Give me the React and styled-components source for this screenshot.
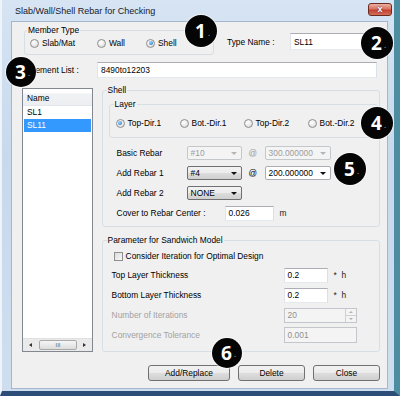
import React from 'react';
import styled, { createGlobalStyle, css } from 'styled-components';

const GlobalStyle = createGlobalStyle`
  html, body { margin: 0; padding: 0; background: #ffffff; }
  body {
    font-family: "Liberation Sans", Arial, sans-serif;
    font-size: 8.4px;
    color: #000;
  }
  * { box-sizing: border-box; }
`;

const Window = styled.div`
  position: relative;
  width: 400px;
  height: 396px;
  display: flex;
  flex-direction: column;
  padding: 0 6px 2px 9px;
  background: linear-gradient(#d6e4f3, #c8d9ec 40%, #cfdeef);
  border-left: 2px solid #eef4fa;
  border-right: 6px solid #4d8da2;
  border-bottom: 5px solid #2b4d77;
`;

const TitleBar = styled.div`
  height: 21px;
  display: flex;
  align-items: flex-start;
  margin-left: -7px;
  margin-right: -4px;
  padding-left: 11px;
`;

const Title = styled.span`
  font-size: 9px;
  line-height: 10px;
  padding-top: 6px;
  color: #15202c;
`;

const CloseButton = styled.div`
  margin-left: auto;
  margin-top: 3px;
  width: 24px;
  height: 13px;
  border: 1px solid #6d2a20;
  border-radius: 3px;
  background: linear-gradient(#eab0a2 0%, #d97564 45%, #c4402f 55%, #d2705c 100%);
  color: #fff;
  font-weight: bold;
  font-size: 9px;
  line-height: 11px;
  text-align: center;
  text-shadow: 0 0 2px #5a1a10;
`;

const Client = styled.div`
  flex: 1;
  display: flex;
  flex-direction: column;
  background: #f0f0f0;
  border: 1px solid #a5b7cc;
  padding: 0 7px 0 10px;
`;

const TopRow = styled.div`
  display: flex;
  align-items: flex-start;
  margin-top: 3px;
`;

const Group = styled.fieldset`
  margin: 0;
  padding: 0;
  border: 1px solid #d5dfe5;
  border-radius: 3px;
  min-width: 0;
`;

// legend offset is measured from the fieldset's padding edge
const Legend = styled.legend`
  margin-left: ${p => p.$shift ?? 2}px;
  padding: 0 1px;
  line-height: 10px;
  font-size: 8.4px;
`;

const MemberGroup = styled(Group)`
  margin-left: 2px;
  width: 190px;
  padding: 0 0 3px 5px;
`;

const RadioRow = styled.div`
  display: grid;
  grid-template-columns: ${p => p.$cols};
  align-items: center;
  height: ${p => p.$h || 16}px;
`;

const RadioItem = styled.label`
  display: flex;
  align-items: center;
  gap: 3px;
  white-space: nowrap;
`;

const RadioDot = styled.span`
  position: relative;
  flex: none;
  width: 9px;
  height: 9px;
  border-radius: 50%;
  border: 1px solid #8e8f8f;
  background: radial-gradient(circle at 40% 35%, #ffffff 0%, #e8e8e8 55%, #cacaca 100%);
  ${p => p.$on && css`
    &::after {
      content: '';
      position: absolute;
      left: 1.5px;
      top: 1.5px;
      width: 4px;
      height: 4px;
      border-radius: 50%;
      background: radial-gradient(circle at 40% 35%, #9ad6ff, #1a64b8);
    }
  `}
`;

const Radio = ({ on, children }) => (
  <RadioItem>
    <RadioDot $on={on} />
    {children}
  </RadioItem>
);

const NameBlock = styled.div`
  display: flex;
  align-items: center;
  margin-top: 8px;
  margin-left: 13px;
`;

const Label = styled.span`
  width: ${p => (p.$w ? `${p.$w}px` : 'auto')};
  flex: none;
  white-space: nowrap;
  color: ${p => (p.$dim ? '#a2a2a2' : '#000')};
`;

const Field = styled.div`
  width: ${p => p.$w}px;
  height: ${p => p.$h || 15}px;
  display: flex;
  align-items: center;
  padding-left: 3px;
  flex: none;
  background: ${p => (p.$disabled ? '#f4f4f4' : '#ffffff')};
  color: ${p => (p.$disabled ? '#8f8f8f' : '#000')};
  border: 1px solid;
  border-color: ${p => (p.$disabled ? '#c3c6ca' : '#abadb3 #dbdfe6 #e3e9ef #e2e3ea')};
`;

const ElementRow = styled.div`
  display: flex;
  align-items: center;
  margin-top: 7px;
  margin-left: 6px;
`;

const MainRow = styled.div`
  display: flex;
  align-items: flex-start;
  margin-top: 7px;
`;

const ListBox = styled.div`
  margin-top: 3px;
  width: 71px;
  height: 264px;
  display: flex;
  flex-direction: column;
  background: #fff;
  border: 1px solid #828790;
`;

const ListHeader = styled.div`
  height: 17px;
  padding: 4px 0 0 4px;
  background: linear-gradient(#ffffff 0%, #ffffff 25%, #f1f2f4 30%, #eceef1 100%);
  border-bottom: 1px solid #e3e6ea;
`;

const ListItem = styled.div`
  height: 13px;
  line-height: 13px;
  margin: 0 1px;
  padding-left: 3px;
  ${p => p.$sel && css`
    background: #3399ff;
    color: #fff;
  `}
`;

const HScroll = styled.div`
  margin-top: auto;
  height: 13px;
  display: flex;
  align-items: center;
  gap: 3px;
  padding: 0 4px;
  background: #eaeaea;
  border-top: 1px solid #e0e0e0;
`;

const Arrow = styled.span`
  width: 0;
  height: 0;
  border-top: 2.5px solid transparent;
  border-bottom: 2.5px solid transparent;
  ${p => (p.$dir === 'left'
    ? css`border-right: 3px solid #333;`
    : css`border-left: 3px solid #333;`)}
  margin: 0 2px;
`;

const Thumb = styled.span`
  width: 38px;
  height: 10px;
  margin-left: 2px;
  margin-right: auto;
  border: 1px solid #a9a9a9;
  border-radius: 2px;
  background: linear-gradient(#f6f6f6, #dcdcdc);
  color: #666;
  font-size: 6px;
  line-height: 8px;
  text-align: center;
`;

const RightCol = styled.div`
  margin-left: 9px;
  width: 280px;
  display: flex;
  flex-direction: column;
`;

const ShellGroup = styled(Group)`
  padding: 0 0 3px 0;
`;

const LayerGroup = styled(Group)`
  margin: 4px 1px 0 6px;
  padding: 7px 0 7px 6px;
`;

const RebarGrid = styled.div`
  margin-top: 5px;
  padding-left: 14px;
  display: flex;
  flex-direction: column;
`;

const FormRow = styled.div`
  height: 20px;
  display: flex;
  align-items: center;
`;

const At = styled.span`
  width: 16px;
  margin-left: 7px;
  flex: none;
  color: ${p => (p.$dim ? '#9a9a9a' : '#000')};
`;

const Combo = styled.div`
  width: ${p => p.$w}px;
  height: 14px;
  flex: none;
  display: flex;
  align-items: center;
  justify-content: space-between;
  padding: 0 4px 0 3px;
  border: 1px solid;
  border-radius: 2px;
  ${p => (p.$disabled
    ? css`
        border-color: #c5c8cb;
        background: #f4f4f4;
        color: #9d9d9d;
      `
    : p.$edit
      ? css`
        border-color: #abadb3;
        background: #ffffff;
      `
      : css`
        border-color: #707070;
        background: linear-gradient(#f2f2f2 0%, #ebebeb 49%, #dddddd 51%, #cfcfcf 100%);
      `)}
`;

const DownArrow = styled.span`
  width: 0;
  height: 0;
  border-left: 3px solid transparent;
  border-right: 3px solid transparent;
  border-top: 3.5px solid ${p => (p.$dim ? '#b5b5b5' : '#111')};
`;

const Unit = styled.span`
  margin-left: ${p => p.$gap}px;
  color: #222;
`;

const ParamGroup = styled(Group)`
  margin-top: 8px;
  padding: 4px 0 6px 9px;
`;

const CheckRow = styled.label`
  display: flex;
  align-items: center;
  gap: 3px;
  height: 14px;
  margin-left: 2px;
  margin-bottom: 2px;
`;

const CheckBox = styled.span`
  width: 9px;
  height: 9px;
  flex: none;
  border: 1px solid #8e8f8f;
  background: linear-gradient(135deg, #dcdcdc, #f8f8f8);
`;

const Spin = styled.span`
  margin-left: auto;
  width: 11px;
  height: 13px;
  display: flex;
  flex-direction: column;
  border-left: 1px solid #d0d0d0;
  & > span {
    flex: 1;
    display: flex;
    align-items: center;
    justify-content: center;
  }
  & > span + span { border-top: 1px solid #d0d0d0; }
`;

const TinyTri = styled.span`
  width: 0;
  height: 0;
  border-left: 2px solid transparent;
  border-right: 2px solid transparent;
  ${p => (p.$up
    ? css`border-bottom: 2.5px solid #b0b0b0;`
    : css`border-top: 2.5px solid #b0b0b0;`)}
`;

const ButtonRow = styled.div`
  margin-top: 13px;
  display: flex;
  justify-content: flex-end;
  gap: 8px;
`;

const Button = styled.button`
  width: ${p => p.$w}px;
  height: 16px;
  padding: 0;
  font-family: inherit;
  font-size: 8.4px;
  color: #000;
  border: 1px solid #707070;
  border-radius: 3px;
  background: linear-gradient(#f2f2f2 0%, #ebebeb 49%, #dddddd 51%, #cfcfcf 100%);
`;

const Badge = styled.div`
  position: absolute;
  left: ${p => p.$x - p.$r}px;
  top: ${p => p.$y - p.$r}px;
  width: ${p => p.$r * 2}px;
  height: ${p => p.$r * 2}px;
  border-radius: 50%;
  background: #050505;
  box-shadow: 0 0 1px 1px rgba(255, 255, 255, 0.6);
  display: flex;
  align-items: center;
  justify-content: center;
  color: #fff;
  font-family: "Open Sans", "Liberation Sans", sans-serif;
  font-weight: bold;
  font-size: 19px;
  line-height: 1;
  padding-left: 3px;
`;

const BadgeDot = styled.span`
  font-size: 7px;
  color: #8a8a8a;
  margin-left: 2px;
  align-self: flex-end;
  margin-bottom: 10px;
`;

const Marker = ({ n, x, y, r = 16 }) => (
  <Badge $x={x} $y={y} $r={r}>
    {n}
    <BadgeDot>.</BadgeDot>
  </Badge>
);

export default function App() {
  return (
    <>
      <GlobalStyle />
      <Window>
        <TitleBar>
          <Title>Slab/Wall/Shell Rebar for Checking</Title>
          <CloseButton>x</CloseButton>
        </TitleBar>
        <Client>
          <TopRow>
            <MemberGroup>
              <Legend $shift={-3}>Member Type</Legend>
              <RadioRow $cols="67px 49px auto">
                <Radio>Slab/Mat</Radio>
                <Radio>Wall</Radio>
                <Radio on>Shell</Radio>
              </RadioRow>
            </MemberGroup>
            <NameBlock>
              <Label $w={63}>Type Name :</Label>
              <Field $w={90} $h={17}>SL11</Field>
            </NameBlock>
          </TopRow>

          <ElementRow>
            <Label $w={69}>Element List :</Label>
            <Field $w={280} $h={16}>8490to12203</Field>
          </ElementRow>

          <MainRow>
            <ListBox>
              <ListHeader>Name</ListHeader>
              <ListItem>SL1</ListItem>
              <ListItem $sel>SL11</ListItem>
              <HScroll>
                <Arrow $dir="left" />
                <Thumb>III</Thumb>
                <Arrow $dir="right" />
              </HScroll>
            </ListBox>

            <RightCol>
              <ShellGroup>
                <Legend $shift={4}>Shell</Legend>
                <LayerGroup>
                  <Legend $shift={-2}>Layer</Legend>
                  <RadioRow $cols="64px 64px 64px auto" $h={14}>
                    <Radio on>Top-Dir.1</Radio>
                    <Radio>Bot.-Dir.1</Radio>
                    <Radio>Top-Dir.2</Radio>
                    <Radio>Bot.-Dir.2</Radio>
                  </RadioRow>
                </LayerGroup>
                <RebarGrid>
                  <FormRow>
                    <Label $w={70}>Basic Rebar</Label>
                    <Combo $w={55} $disabled>#10<DownArrow $dim /></Combo>
                    <At $dim>@</At>
                    <Combo $w={66} $disabled>300.000000<DownArrow $dim /></Combo>
                  </FormRow>
                  <FormRow>
                    <Label $w={70}>Add Rebar 1</Label>
                    <Combo $w={55}>#4<DownArrow /></Combo>
                    <At>@</At>
                    <Combo $w={66} $edit>200.000000<DownArrow /></Combo>
                  </FormRow>
                  <FormRow>
                    <Label $w={70}>Add Rebar 2</Label>
                    <Combo $w={55}>NONE<DownArrow /></Combo>
                  </FormRow>
                  <FormRow>
                    <Label $w={108}>Cover to Rebar Center :</Label>
                    <Field $w={49}>0.026</Field>
                    <Unit $gap={6}>m</Unit>
                  </FormRow>
                </RebarGrid>
              </ShellGroup>

              <ParamGroup>
                <Legend $shift={-5}>Parameter for Sandwich Model</Legend>
                <CheckRow>
                  <CheckBox />
                  Consider Iteration for Optimal Design
                </CheckRow>
                <FormRow>
                  <Label $w={172}>Top Layer Thickness</Label>
                  <Field $w={44}>0.2</Field>
                  <Unit $gap={6}>*&nbsp;&nbsp;h</Unit>
                </FormRow>
                <FormRow>
                  <Label $w={172}>Bottom Layer Thickness</Label>
                  <Field $w={44}>0.2</Field>
                  <Unit $gap={6}>*&nbsp;&nbsp;h</Unit>
                </FormRow>
                <FormRow>
                  <Label $w={172} $dim>Number of Iterations</Label>
                  <Field $w={73} $disabled>
                    20
                    <Spin>
                      <span><TinyTri $up /></span>
                      <span><TinyTri /></span>
                    </Spin>
                  </Field>
                </FormRow>
                <FormRow>
                  <Label $w={172} $dim>Convergence Tolerance</Label>
                  <Field $w={73} $h={16} $disabled>0.001</Field>
                </FormRow>
              </ParamGroup>
            </RightCol>
          </MainRow>

          <ButtonRow>
            <Button $w={82}>Add/Replace</Button>
            <Button $w={67}>Delete</Button>
            <Button $w={67}>Close</Button>
          </ButtonRow>
        </Client>

        <Marker n="1" x={199} y={31} />
        <Marker n="2" x={375} y={43} />
        <Marker n="3" x={19} y={72} r={15} />
        <Marker n="4" x={375} y={123} />
        <Marker n="5" x={348} y={169} />
        <Marker n="6" x={225} y={353} r={15} />
      </Window>
    </>
  );
}
